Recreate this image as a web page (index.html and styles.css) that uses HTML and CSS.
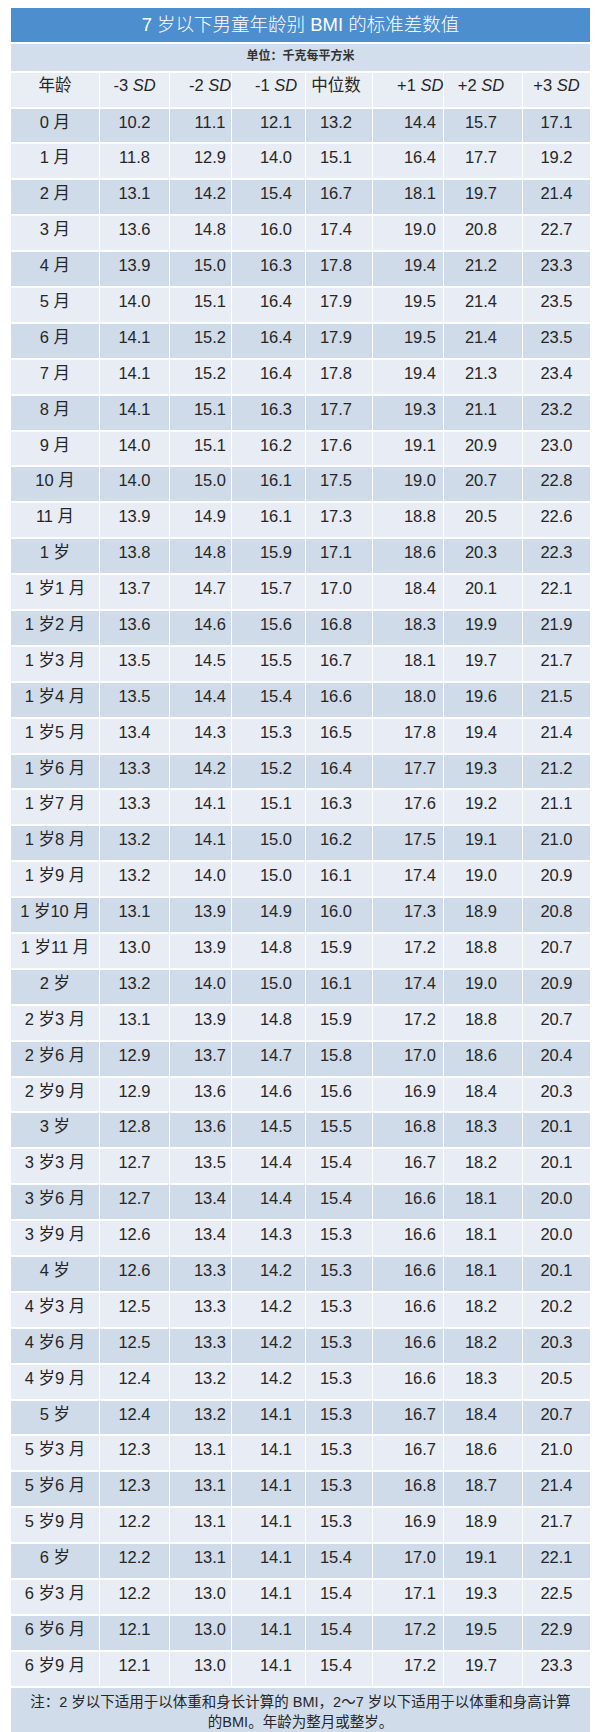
FILE: index.html
```html
<!DOCTYPE html>
<html lang="zh-CN">
<head>
<meta charset="utf-8">
<title>7 岁以下男童年龄别 BMI 的标准差数值</title>
<link rel="stylesheet" href="styles.css">
</head>
<body>
<div class="sheet">
  <div class="title">7 岁以下男童年龄别 BMI 的标准差数值</div>
  <div class="unit">单位：千克每平方米</div>
  <div class="grid" id="grid">
    <div class="row head">
      <div>年龄</div><div>-3 <i>SD</i></div><div>-2 <i>SD</i></div><div>-1 <i>SD</i></div><div>中位数</div><div>+1 <i>SD</i></div><div>+2 <i>SD</i></div><div>+3 <i>SD</i></div>
    </div>
    <div class="row dark"><div>0 月</div><div>10.2</div><div>11.1</div><div>12.1</div><div>13.2</div><div>14.4</div><div>15.7</div><div>17.1</div></div>
    <div class="row"><div>1 月</div><div>11.8</div><div>12.9</div><div>14.0</div><div>15.1</div><div>16.4</div><div>17.7</div><div>19.2</div></div>
    <div class="row dark"><div>2 月</div><div>13.1</div><div>14.2</div><div>15.4</div><div>16.7</div><div>18.1</div><div>19.7</div><div>21.4</div></div>
    <div class="row"><div>3 月</div><div>13.6</div><div>14.8</div><div>16.0</div><div>17.4</div><div>19.0</div><div>20.8</div><div>22.7</div></div>
    <div class="row dark"><div>4 月</div><div>13.9</div><div>15.0</div><div>16.3</div><div>17.8</div><div>19.4</div><div>21.2</div><div>23.3</div></div>
    <div class="row"><div>5 月</div><div>14.0</div><div>15.1</div><div>16.4</div><div>17.9</div><div>19.5</div><div>21.4</div><div>23.5</div></div>
    <div class="row dark"><div>6 月</div><div>14.1</div><div>15.2</div><div>16.4</div><div>17.9</div><div>19.5</div><div>21.4</div><div>23.5</div></div>
    <div class="row"><div>7 月</div><div>14.1</div><div>15.2</div><div>16.4</div><div>17.8</div><div>19.4</div><div>21.3</div><div>23.4</div></div>
    <div class="row dark"><div>8 月</div><div>14.1</div><div>15.1</div><div>16.3</div><div>17.7</div><div>19.3</div><div>21.1</div><div>23.2</div></div>
    <div class="row"><div>9 月</div><div>14.0</div><div>15.1</div><div>16.2</div><div>17.6</div><div>19.1</div><div>20.9</div><div>23.0</div></div>
    <div class="row dark"><div>10 月</div><div>14.0</div><div>15.0</div><div>16.1</div><div>17.5</div><div>19.0</div><div>20.7</div><div>22.8</div></div>
    <div class="row"><div>11 月</div><div>13.9</div><div>14.9</div><div>16.1</div><div>17.3</div><div>18.8</div><div>20.5</div><div>22.6</div></div>
    <div class="row dark"><div>1 岁</div><div>13.8</div><div>14.8</div><div>15.9</div><div>17.1</div><div>18.6</div><div>20.3</div><div>22.3</div></div>
    <div class="row"><div>1 岁1 月</div><div>13.7</div><div>14.7</div><div>15.7</div><div>17.0</div><div>18.4</div><div>20.1</div><div>22.1</div></div>
    <div class="row dark"><div>1 岁2 月</div><div>13.6</div><div>14.6</div><div>15.6</div><div>16.8</div><div>18.3</div><div>19.9</div><div>21.9</div></div>
    <div class="row"><div>1 岁3 月</div><div>13.5</div><div>14.5</div><div>15.5</div><div>16.7</div><div>18.1</div><div>19.7</div><div>21.7</div></div>
    <div class="row dark"><div>1 岁4 月</div><div>13.5</div><div>14.4</div><div>15.4</div><div>16.6</div><div>18.0</div><div>19.6</div><div>21.5</div></div>
    <div class="row"><div>1 岁5 月</div><div>13.4</div><div>14.3</div><div>15.3</div><div>16.5</div><div>17.8</div><div>19.4</div><div>21.4</div></div>
    <div class="row dark"><div>1 岁6 月</div><div>13.3</div><div>14.2</div><div>15.2</div><div>16.4</div><div>17.7</div><div>19.3</div><div>21.2</div></div>
    <div class="row"><div>1 岁7 月</div><div>13.3</div><div>14.1</div><div>15.1</div><div>16.3</div><div>17.6</div><div>19.2</div><div>21.1</div></div>
    <div class="row dark"><div>1 岁8 月</div><div>13.2</div><div>14.1</div><div>15.0</div><div>16.2</div><div>17.5</div><div>19.1</div><div>21.0</div></div>
    <div class="row"><div>1 岁9 月</div><div>13.2</div><div>14.0</div><div>15.0</div><div>16.1</div><div>17.4</div><div>19.0</div><div>20.9</div></div>
    <div class="row dark"><div>1 岁10 月</div><div>13.1</div><div>13.9</div><div>14.9</div><div>16.0</div><div>17.3</div><div>18.9</div><div>20.8</div></div>
    <div class="row"><div>1 岁11 月</div><div>13.0</div><div>13.9</div><div>14.8</div><div>15.9</div><div>17.2</div><div>18.8</div><div>20.7</div></div>
    <div class="row dark"><div>2 岁</div><div>13.2</div><div>14.0</div><div>15.0</div><div>16.1</div><div>17.4</div><div>19.0</div><div>20.9</div></div>
    <div class="row"><div>2 岁3 月</div><div>13.1</div><div>13.9</div><div>14.8</div><div>15.9</div><div>17.2</div><div>18.8</div><div>20.7</div></div>
    <div class="row dark"><div>2 岁6 月</div><div>12.9</div><div>13.7</div><div>14.7</div><div>15.8</div><div>17.0</div><div>18.6</div><div>20.4</div></div>
    <div class="row"><div>2 岁9 月</div><div>12.9</div><div>13.6</div><div>14.6</div><div>15.6</div><div>16.9</div><div>18.4</div><div>20.3</div></div>
    <div class="row dark"><div>3 岁</div><div>12.8</div><div>13.6</div><div>14.5</div><div>15.5</div><div>16.8</div><div>18.3</div><div>20.1</div></div>
    <div class="row"><div>3 岁3 月</div><div>12.7</div><div>13.5</div><div>14.4</div><div>15.4</div><div>16.7</div><div>18.2</div><div>20.1</div></div>
    <div class="row dark"><div>3 岁6 月</div><div>12.7</div><div>13.4</div><div>14.4</div><div>15.4</div><div>16.6</div><div>18.1</div><div>20.0</div></div>
    <div class="row"><div>3 岁9 月</div><div>12.6</div><div>13.4</div><div>14.3</div><div>15.3</div><div>16.6</div><div>18.1</div><div>20.0</div></div>
    <div class="row dark"><div>4 岁</div><div>12.6</div><div>13.3</div><div>14.2</div><div>15.3</div><div>16.6</div><div>18.1</div><div>20.1</div></div>
    <div class="row"><div>4 岁3 月</div><div>12.5</div><div>13.3</div><div>14.2</div><div>15.3</div><div>16.6</div><div>18.2</div><div>20.2</div></div>
    <div class="row dark"><div>4 岁6 月</div><div>12.5</div><div>13.3</div><div>14.2</div><div>15.3</div><div>16.6</div><div>18.2</div><div>20.3</div></div>
    <div class="row"><div>4 岁9 月</div><div>12.4</div><div>13.2</div><div>14.2</div><div>15.3</div><div>16.6</div><div>18.3</div><div>20.5</div></div>
    <div class="row dark"><div>5 岁</div><div>12.4</div><div>13.2</div><div>14.1</div><div>15.3</div><div>16.7</div><div>18.4</div><div>20.7</div></div>
    <div class="row"><div>5 岁3 月</div><div>12.3</div><div>13.1</div><div>14.1</div><div>15.3</div><div>16.7</div><div>18.6</div><div>21.0</div></div>
    <div class="row dark"><div>5 岁6 月</div><div>12.3</div><div>13.1</div><div>14.1</div><div>15.3</div><div>16.8</div><div>18.7</div><div>21.4</div></div>
    <div class="row"><div>5 岁9 月</div><div>12.2</div><div>13.1</div><div>14.1</div><div>15.3</div><div>16.9</div><div>18.9</div><div>21.7</div></div>
    <div class="row dark"><div>6 岁</div><div>12.2</div><div>13.1</div><div>14.1</div><div>15.4</div><div>17.0</div><div>19.1</div><div>22.1</div></div>
    <div class="row"><div>6 岁3 月</div><div>12.2</div><div>13.0</div><div>14.1</div><div>15.4</div><div>17.1</div><div>19.3</div><div>22.5</div></div>
    <div class="row dark"><div>6 岁6 月</div><div>12.1</div><div>13.0</div><div>14.1</div><div>15.4</div><div>17.2</div><div>19.5</div><div>22.9</div></div>
    <div class="row"><div>6 岁9 月</div><div>12.1</div><div>13.0</div><div>14.1</div><div>15.4</div><div>17.2</div><div>19.7</div><div>23.3</div></div>
  </div>
  <div class="note">注：2 岁以下适用于以体重和身长计算的 BMI，2～7 岁以下适用于以体重和身高计算<br>的BMI。年龄为整月或整岁。</div>
</div>
</body>
</html>
```
FILE: styles.css
```css
html, body {
  margin: 0;
  padding: 0;
  background: #ffffff;
}

body {
  font-family: "Liberation Sans", "Noto Sans CJK SC", sans-serif;
  color: #262626;
}

.sheet {
  width: 579px;
  margin: 8px 0 0 11px;
  display: flex;
  flex-direction: column;
  gap: 2px;
}

.title {
  height: 34px;
  background: #4d8ecf;
  color: #ffffff;
  font-size: 18.5px;
  font-weight: 300;
  line-height: 34px;
  text-align: center;
}

.unit {
  height: 27px;
  background: #d2deeb;
  font-size: 12px;
  font-weight: bold;
  line-height: 24px;
  text-align: center;
  color: #333333;
}

.grid {
  display: grid;
  grid-template-columns: 88px 69px 61px 73px 66px 70px 78px 67px;
  grid-template-rows: 33.5px;
  grid-auto-rows: 33.9px;
  column-gap: 1px;
  row-gap: 2px;
}

.row {
  display: contents;
}

.row > div {
  background: #e8ecf4;
  font-size: 16.5px;
  line-height: 20px;
  padding-top: 3px;
  text-align: center;
  white-space: nowrap;
}

.row.dark > div {
  background: #cfdbe9;
}

.row.head > div {
  background: #e9edf4;
  padding-top: 2px;
}

.row > div:nth-child(3) { padding-left: 19px; }
.row > div:nth-child(4) { padding-left: 15px; }
.row > div:nth-child(5) { padding-right: 6px; }
.row > div:nth-child(6) { padding-left: 24px; }
.row > div:nth-child(7) { padding-right: 4px; }

.row i {
  font-style: italic;
}

.note {
  height: 42px;
  background: #d1dcea;
  font-size: 14.5px;
  line-height: 20px;
  padding-top: 4px;
  text-align: center;
}
```
